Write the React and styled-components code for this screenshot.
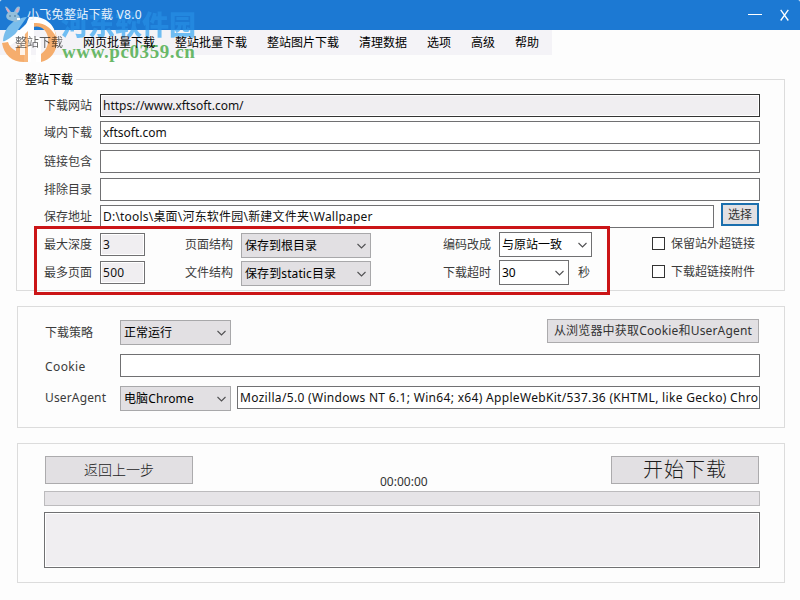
import React from 'react';
import styled, { createGlobalStyle } from 'styled-components';

const Global = createGlobalStyle`
  * { box-sizing: border-box; }
  html, body { margin: 0; padding: 0; }
  body { width: 800px; height: 600px; overflow: hidden; background: #fff;
    font: 12px/16px "Noto Sans", "Noto Sans CJK SC", sans-serif; color: #111; }
`;

const Window = styled.main`
  position: relative;
  display: flex;
  flex-direction: column;
  width: 800px;
  height: 600px;
  background: #fdfdfd;
`;

const TitleBar = styled.header`
  display: flex;
  align-items: center;
  height: 30px;
  flex: none;
  padding: 0 11px 0 27px;
  background: #1c79d3;
  color: #fff;
  border-radius: 2px 2px 0 0;
`;

const Title = styled.h1`
  position: relative;
  z-index: 2;
  flex: 1;
  margin: 0;
  color: #e6f1fb;
  font-size: 12px;
  font-weight: 400;
  line-height: 30px;
  letter-spacing: 0.3px;
`;

const WindowButtons = styled.div`
  display: flex;
  align-items: center;
  gap: 18px;
`;

const MenuBar = styled.nav`
  display: flex;
  align-items: center;
  flex: none;
  gap: 20px;
  width: 552px;
  height: 25px;
  padding-left: 15px;
  background: #f4f3f7;
  color: #000;
  white-space: nowrap;
`;

const MenuItem = styled.span`
  position: relative;
  z-index: 2;
  opacity: ${p => (p.$faded ? 0.62 : 1)};
`;

const Group = styled.section`
  display: flex;
  flex-direction: column;
  flex: none;
  width: ${p => p.$w || 768}px;
  height: ${p => p.$h}px;
  margin: ${p => p.$mt}px 0 0 ${p => p.$ml || 17}px;
  padding: ${p => p.$pad};
  border: 1px solid #dcdcdc;
`;

const Legend = styled.h2`
  align-self: flex-start;
  height: 18px;
  margin: -9px 0 5px -21px;
  padding: 0 3px 0 2px;
  background: #fdfdfd;
  color: #000;
  font-size: 12px;
  font-weight: 400;
  line-height: 18px;
`;

const Row = styled.div`
  display: flex;
  align-items: flex-start;
  flex: none;
  height: ${p => p.$h || 23}px;
  margin-bottom: ${p => p.$mb || 0}px;
`;

const Label = styled.label`
  flex: none;
  width: ${p => p.$w}px;
  margin-left: ${p => p.$ml || 0}px;
  padding-top: ${p => p.$pt ?? 4}px;
  color: #3b3b3b;
  letter-spacing: ${p => p.$ls || 0}px;
  white-space: nowrap;
`;

const Field = styled.div`
  flex: none;
  width: ${p => p.$w}px;
  height: 23px;
  padding: 3px 0 0 2px;
  overflow: hidden;
  border: 1px solid ${p => (p.$dark ? '#333' : '#707072')};
  background: ${p => (p.$gray ? '#f0eef1' : '#fff')};
  box-shadow: inset 0 0 0 1px #fff;
  letter-spacing: ${p => p.$ls || 0}px;
  white-space: nowrap;
`;

const SelectBox = styled.div`
  display: flex;
  align-items: center;
  justify-content: space-between;
  flex: none;
  width: ${p => p.$w}px;
  height: 25px;
  margin-top: ${p => p.$mt || 0}px;
  padding: 0 3px 0 ${p => (p.$white ? 2 : 3)}px;
  border: 1px solid ${p => (p.$white ? '#707072' : '#a8a8aa')};
  background: ${p => (p.$white ? '#fff' : '#e2e0e3')};
  color: #000;
  letter-spacing: ${p => p.$ls || 0}px;
  white-space: nowrap;
`;

const Button = styled.button`
  display: flex;
  align-items: center;
  justify-content: center;
  flex: none;
  width: ${p => p.$w}px;
  height: ${p => p.$h}px;
  margin: ${p => p.$m || 0};
  padding: 0;
  border: ${p => (p.$focus ? '2px solid #1b6fae' : '1px solid #acabad')};
  background: #e2e0e3;
  color: ${p => (p.$light ? '#1c1c1c' : '#333')};
  font: ${p => (p.$light ? 300 : 400)} ${p => p.$fs || 12}px/1 "Noto Sans", "Noto Sans CJK SC", sans-serif;
  letter-spacing: ${p => p.$ls || 0}px;
  white-space: nowrap;
`;

const CheckBox = styled.span`
  flex: none;
  width: 13px;
  height: 13px;
  margin: 4px 6px 0 ${p => p.$ml}px;
  border: 1px solid #333;
  background: #fff;
`;

const Timer = styled.time`
  width: 418px;
  padding: 18px 0 0 187px;
  color: #333;
`;

const Progress = styled.div`
  flex: none;
  width: 716px;
  height: 15px;
  margin: 7px 0 6px;
  border: 1px solid #bcbbbd;
  background: #e6e4e7;
`;

const LogArea = styled.div`
  flex: none;
  width: 716px;
  height: 56px;
  border: 1px solid #707072;
  background: #f0eef1;
  box-shadow: inset 0 0 0 1px #fff;
`;

const Highlight = styled.div`
  position: absolute;
  left: 34px;
  top: 226px;
  width: 576px;
  height: 69px;
  border: 3px solid #cb1517;
  pointer-events: none;
`;

const BrandName = styled.div`
  position: absolute;
  left: 61px;
  top: 8px;
  background: linear-gradient(#2388df 22px, #6fbdf3 22px);
  background-clip: text;
  -webkit-background-clip: text;
  color: transparent;
  font: 900 27px/32px "Noto Sans CJK SC", sans-serif;
  white-space: nowrap;
  pointer-events: none;
`;

const BrandUrl = styled.div`
  position: absolute;
  left: 62px;
  top: 41px;
  color: #69b868;
  font: bold 19px/22px "Liberation Serif", serif;
  letter-spacing: 0.6px;
  white-space: nowrap;
  pointer-events: none;
`;

const Logo = styled.svg`
  position: absolute;
  left: 0;
  top: 0;
  z-index: 1;
  pointer-events: none;
`;

const BrandLogo = () => (
  <Logo width="70" height="70" viewBox="0 0 70 70" fill="none">
    <path d="M27 17C14 18 4 27 3 41L9 44C15 34 20 27 27 17Z" fill="#78bdec" />
    <path d="M3 42C12 38 20 30 31 19L33 23C26 32 18 41 9 46Z" fill="#fff" />
    <path d="M2 43C4 55 12 62 24 62V39L16 44V51C12 49 9 46 8 42Z" fill="#f5ad6d" />
    <path d="M24 33 31 26V62H24Z" fill="#f7b77c" />
    <path d="M16 42 25 32V55H20V45L16 48Z" fill="#fff" opacity=".85" />
    <path d="M33 19C48 18 57 28 57 41 57 52 50 60 41 62V54C47 50 49 43 48 37 46 29 40 25 33 27Z" fill="#f5ad6d" />
    <path d="M29 17C43 15 55 23 56 37 52 28 44 22 34 23V37H41V62H36V42H31V62H28V31L22 37C24 29 27 22 29 17Z" fill="#fff" />
    <path d="M9 20C5 18 6 14 8 13L5 7Q6 5 11 12H14Q17 5 20 7Q20 12 17 14C22 17 20 22 15 22Z" fill="#94bfdb" />
    <path d="M6.5 8.5 9 12M18.5 8.5 16.5 12" stroke="#e0a8bf" strokeWidth="1.7" />
    <circle cx="10" cy="16" r=".7" fill="#315d80" />
    <circle cx="15" cy="16" r=".7" fill="#315d80" />
    <path d="M17 19h3" stroke="#fff" strokeWidth="2" />
  </Logo>
);

const Chevron = () => (
  <svg width="11" height="8" viewBox="0 0 11 8" fill="none" stroke="#505052" strokeWidth="1.1">
    <path d="M1.5 2 L5.5 6 L9.5 2" />
  </svg>
);

const Select = ({ children, ...props }) => (
  <SelectBox {...props}><span>{children}</span><Chevron /></SelectBox>
);

const menu = ['整站下载', '网页批量下载', '整站批量下载', '整站图片下载', '清理数据', '选项', '高级', '帮助'];

export default function App() {
  return (
    <Window>
      <Global />
      <TitleBar>
        <Title>小飞兔整站下载 V8.0</Title>
        <WindowButtons>
          <svg width="14" height="10" viewBox="0 0 14 10"><path d="M0 4.5H14" stroke="#fff" /></svg>
          <svg width="9" height="12" viewBox="0 0 9 12" stroke="#fff" strokeWidth="1.3"><path d="M.7 .8 8.3 11.5M8.3 .8 .7 11.5" /></svg>
        </WindowButtons>
      </TitleBar>
      <MenuBar>{menu.map((m, i) => <MenuItem key={m} $faded={i === 0}>{m}</MenuItem>)}</MenuBar>

      <Group $mt={24} $h={212} $w={769} $ml={16} $pad="0 0 0 27px">
        <Legend>整站下载</Legend>
        <Row $mb={4}><Label $w={56}>下载网站</Label><Field $w={660} $gray $dark>https://www.xftsoft.com/</Field></Row>
        <Row $mb={6}><Label $w={56}>域内下载</Label><Field $w={660}>xftsoft.com</Field></Row>
        <Row $mb={5}><Label $w={56}>链接包含</Label><Field $w={660} /></Row>
        <Row $mb={4}><Label $w={56}>排除目录</Label><Field $w={660} /></Row>
        <Row $mb={5}>
          <Label $w={56}>保存地址</Label>
          <Field $w={614} $ls={0.2}>D:\tools\桌面\河东软件园\新建文件夹\Wallpaper</Field>
          <Button $w={38} $h={23} $m="-2px 0 0 7px" $focus>选择</Button>
        </Row>
        <Row $mb={5}>
          <Label $w={56}>最大深度</Label><Field $w={45} $gray>3</Field>
          <Label $w={56} $ml={40}>页面结构</Label><Select $w={130}>保存到根目录</Select>
          <Label $w={56} $ml={72}>编码改成</Label><Select $w={93} $mt={-1} $white>与原站一致</Select>
          <CheckBox $ml={60} /><Label $pt={3}>保留站外超链接</Label>
        </Row>
        <Row>
          <Label $w={56}>最多页面</Label><Field $w={45} $gray $ls={0.3}>500</Field>
          <Label $w={56} $ml={40}>文件结构</Label><Select $w={130} $ls={0.1}>保存到static目录</Select>
          <Label $w={56} $ml={72}>下载超时</Label><Select $w={70} $mt={-1} $white>30</Select>
          <Label $w={14} $ml={9}>秒</Label>
          <CheckBox $ml={60} /><Label $pt={3}>下载超链接附件</Label>
        </Row>
      </Group>

      <Group $mt={15} $h={122} $pad="12px 0 0 27px">
        <Row $h={25} $mb={10}>
          <Label $w={75} $pt={6}>下载策略</Label><Select $w={111} $mt={1}>正常运行</Select>
          <Button $w={212} $h={24} $m="0 0 0 316px" $ls={0.17}>从浏览器中获取Cookie和UserAgent</Button>
        </Row>
        <Row $mb={9}><Label $w={75} $pt={5} $ls={0.4}>Cookie</Label><Field $w={640} /></Row>
        <Row>
          <Label $w={75} $ls={0.15}>UserAgent</Label><Select $w={111} $ls={0.1}>电脑Chrome</Select>
          <Label $w={6} />
          <Field $w={523} $ls={0.32}>Mozilla/5.0 (Windows NT 6.1; Win64; x64) AppleWebKit/537.36 (KHTML, like Gecko) Chro</Field>
        </Row>
      </Group>

      <Group $mt={15} $h={140} $pad="12px 0 0 26px">
        <Row $h={28}>
          <Button $w={148} $h={28} $m="0 0 0 1px" $fs={14} $light>返回上一步</Button>
          <Timer>00:00:00</Timer>
          <Button $w={148} $h={28} $fs={20} $light $ls={1}>开始下载</Button>
        </Row>
        <Progress />
        <LogArea />
      </Group>

      <Highlight />
      <BrandName>河东软件园</BrandName>
      <BrandUrl>www.pc0359.cn</BrandUrl>
      <BrandLogo />
    </Window>
  );
}
